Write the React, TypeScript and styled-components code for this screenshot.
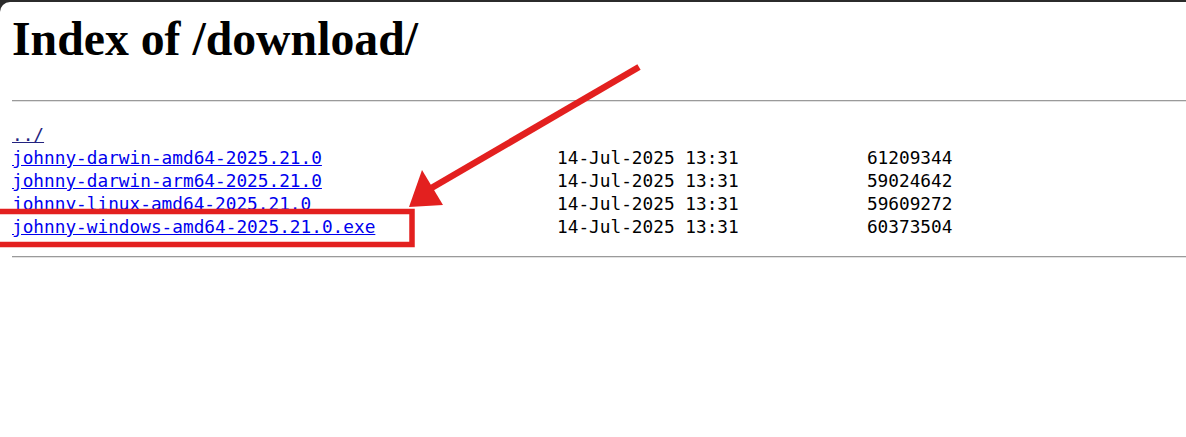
import React from "react";
import styled, { createGlobalStyle } from "styled-components";

const GlobalStyle = createGlobalStyle`
  html, body {
    margin: 0;
    padding: 0;
    background: #2b2b2b;
  }
  #root {
    position: relative;
  }
`;

const Screen = styled.div`
  position: relative;
  width: 1186px;
  height: 437px;
  overflow: hidden;
`;

const Page = styled.div`
  margin-top: 2px;
  height: 435px;
  background: #ffffff;
  border-top-left-radius: 10px;
  padding-left: 12px;
  box-sizing: border-box;
  color: #000;
`;

const Title = styled.h1`
  margin: 0;
  padding-top: 9px;
  font-family: "Liberation Serif", "Times New Roman", serif;
  font-weight: 700;
  font-size: 47.75px;
  line-height: normal;
`;

const Rule = styled.hr<{ $top: number }>`
  margin: ${(p) => p.$top}px 0 0 0;
  height: 0;
  border: 0;
  border-top: 1px solid #9a9a9a;
  border-bottom: 1px solid #e2e2e2;
`;

const Listing = styled.pre`
  margin: 22px 0 0 0;
  font-family: "DejaVu Sans Mono", "Liberation Mono", monospace;
  font-size: 17.75px;
  line-height: 23px;
  color: #000;
`;

const FileLink = styled.a<{ $visited?: boolean }>`
  color: ${(p) => (p.$visited ? "#23237f" : "#0000ee")};
  text-decoration: underline;
`;

const Overlay = styled.svg`
  position: absolute;
  left: 0;
  top: 0;
  pointer-events: none;
`;

const files = [
  { name: "johnny-darwin-amd64-2025.21.0", size: "61209344" },
  { name: "johnny-darwin-arm64-2025.21.0", size: "59024642" },
  { name: "johnny-linux-amd64-2025.21.0", size: "59609272" },
  { name: "johnny-windows-amd64-2025.21.0.exe", size: "60373504" },
];

const DATE = "14-Jul-2025 13:31";

export default function App() {
  return (
    <>
      <GlobalStyle />
      <Screen>
        <Page>
          <Title>Index of /download/</Title>
          <Rule $top={34} />
          <Listing>
            <FileLink href="#" $visited>
              ../
            </FileLink>
            {"\n"}
            {files.map((f) => (
              <React.Fragment key={f.name}>
                <FileLink href="#">{f.name}</FileLink>
                {" ".repeat(51 - f.name.length)}
                {DATE}
                {f.size.padStart(20, " ")}
                {"\n"}
              </React.Fragment>
            ))}
          </Listing>
          <Rule $top={17} />
        </Page>
        <Overlay width="1186" height="437" viewBox="0 0 1186 437">
          <line
            x1="639"
            y1="67"
            x2="428"
            y2="190"
            stroke="#e3201f"
            strokeWidth="6.5"
            strokeLinecap="butt"
          />
          <polygon points="409,207 422,170 443,205" fill="#e3201f" />
          <rect
            x="-10"
            y="211.5"
            width="422"
            height="33"
            fill="none"
            stroke="#e3201f"
            strokeWidth="5.5"
          />
        </Overlay>
      </Screen>
    </>
  );
}
